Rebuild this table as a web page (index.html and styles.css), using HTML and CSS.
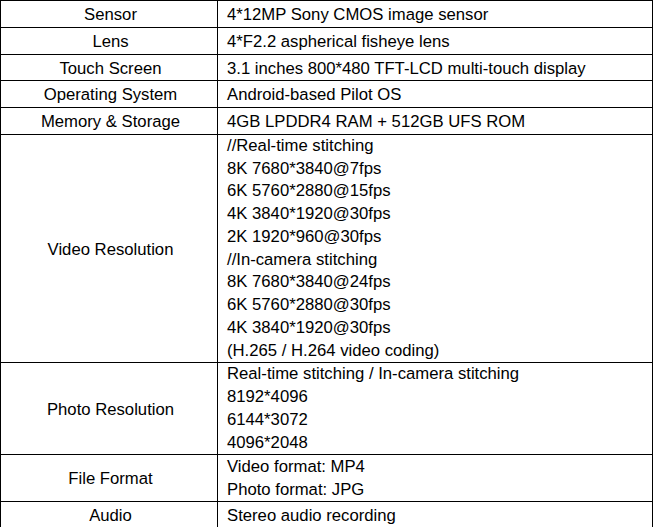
FILE: index.html
```html
<!DOCTYPE html>
<html lang="en">

<head>
    <meta charset="UTF-8">
    <meta name="viewport" content="width=device-width, initial-scale=1.0">
    <title>Camera Specifications</title>
    <link rel="stylesheet" href="styles.css">
</head>

<body>
    <table class="spec-table">
        <colgroup>
            <col class="col-label">
            <col class="col-value">
        </colgroup>
        <tbody>
            <tr class="single">
                <td class="label">Sensor</td>
                <td class="value">4*12MP Sony CMOS image sensor</td>
            </tr>
            <tr class="single">
                <td class="label">Lens</td>
                <td class="value">4*F2.2 aspherical fisheye lens</td>
            </tr>
            <tr class="single">
                <td class="label">Touch Screen</td>
                <td class="value">3.1 inches 800*480 TFT-LCD multi-touch display</td>
            </tr>
            <tr class="single">
                <td class="label">Operating System</td>
                <td class="value">Android-based Pilot OS</td>
            </tr>
            <tr class="single">
                <td class="label">Memory &amp; Storage</td>
                <td class="value">4GB LPDDR4 RAM + 512GB UFS ROM</td>
            </tr>
            <tr>
                <td class="label">Video Resolution</td>
                <td class="value">
                    //Real-time stitching<br>
                    8K 7680*3840@7fps<br>
                    6K 5760*2880@15fps<br>
                    4K 3840*1920@30fps<br>
                    2K 1920*960@30fps<br>
                    //In-camera stitching<br>
                    8K 7680*3840@24fps<br>
                    6K 5760*2880@30fps<br>
                    4K 3840*1920@30fps<br>
                    (H.265 / H.264 video coding)
                </td>
            </tr>
            <tr>
                <td class="label">Photo Resolution</td>
                <td class="value">
                    Real-time stitching / In-camera stitching<br>
                    8192*4096<br>
                    6144*3072<br>
                    4096*2048
                </td>
            </tr>
            <tr class="double">
                <td class="label">File Format</td>
                <td class="value">
                    Video format: MP4<br>
                    Photo format: JPG
                </td>
            </tr>
            <tr class="single">
                <td class="label">Audio</td>
                <td class="value">Stereo audio recording</td>
            </tr>
        </tbody>
    </table>
</body>

</html>
```

FILE: styles.css
```css
body {
    margin: 0;
    padding: 0;
    background-color: #fff;
    font-family: "Liberation Sans", Arial, sans-serif;
    color: #000;
}

.spec-table {
    width: 653px;
    border-collapse: collapse;
    font-size: 16.7px;
    line-height: 22.75px;
}

.col-label {
    width: 217px;
}

.spec-table td {
    border: 1px solid #000;
    padding: 0;
}

.spec-table .label {
    text-align: center;
    vertical-align: middle;
    padding: 3px 5px 0 8px;
}

.spec-table .value {
    text-align: left;
    vertical-align: bottom;
    padding: 0 4px 0 9px;
}

.spec-table tr.single {
    height: 26.6px;
}

.spec-table tr.double {
    height: 47px;
}
```
